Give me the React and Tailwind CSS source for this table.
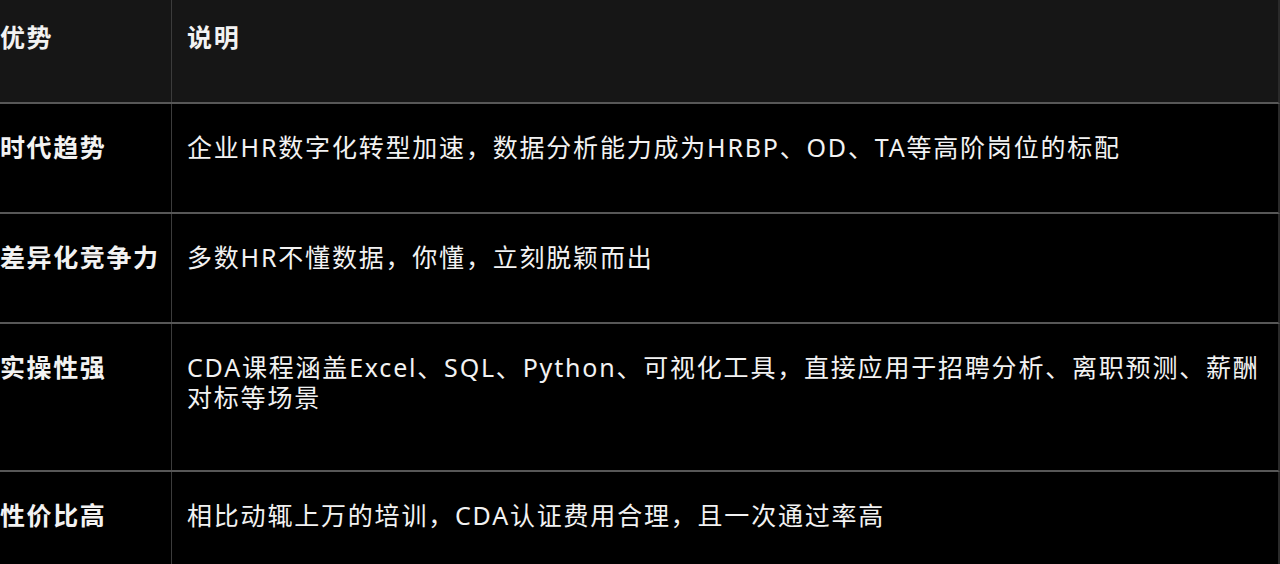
export default function App() {
  const rows = [
    { k: "时代趋势", v: "企业HR数字化转型加速，数据分析能力成为HRBP、OD、TA等高阶岗位的标配", h: "h-[110px]" },
    { k: "差异化竞争力", v: "多数HR不懂数据，你懂，立刻脱颖而出", h: "h-[110px]" },
    { k: "实操性强", v: "CDA课程涵盖Excel、SQL、Python、可视化工具，直接应用于招聘分析、离职预测、薪酬对标等场景", h: "h-[148px]" },
    { k: "性价比高", v: "相比动辄上万的培训，CDA认证费用合理，且一次通过率高", h: "h-[120px]" },
  ];
  return (
    <div
      className="w-[1280px] h-[564px] overflow-hidden bg-black text-[#f2f2f2] text-[25px] leading-[30px] tracking-[1.8px]"
      style={{ fontFamily: '"Noto Sans", "Noto Sans CJK SC", sans-serif' }}
    >
      <div className="grid grid-cols-[172px_1fr] h-[104px] bg-[#161616] border-b-2 border-[#575757] border-r-2 border-r-[#2a2a2a]">
        <div className="border-r border-[#3c3c3c] pt-[22px] font-bold tracking-[1.6px]">优势</div>
        <div className="pl-[15px] pt-[22px] font-bold">说明</div>
      </div>
      {rows.map((r, i) => (
        <div
          key={i}
          className={`grid grid-cols-[172px_1fr] ${r.h} border-b-2 border-[#575757] border-r-2 border-r-[#2a2a2a]`}
        >
          <div className="border-r border-[#3c3c3c] pt-[28px] font-bold whitespace-nowrap tracking-[1.6px]">{r.k}</div>
          <div className="pl-[15px] pr-[8px] pt-[28px]">{r.v}</div>
        </div>
      ))}
    </div>
  );
}
